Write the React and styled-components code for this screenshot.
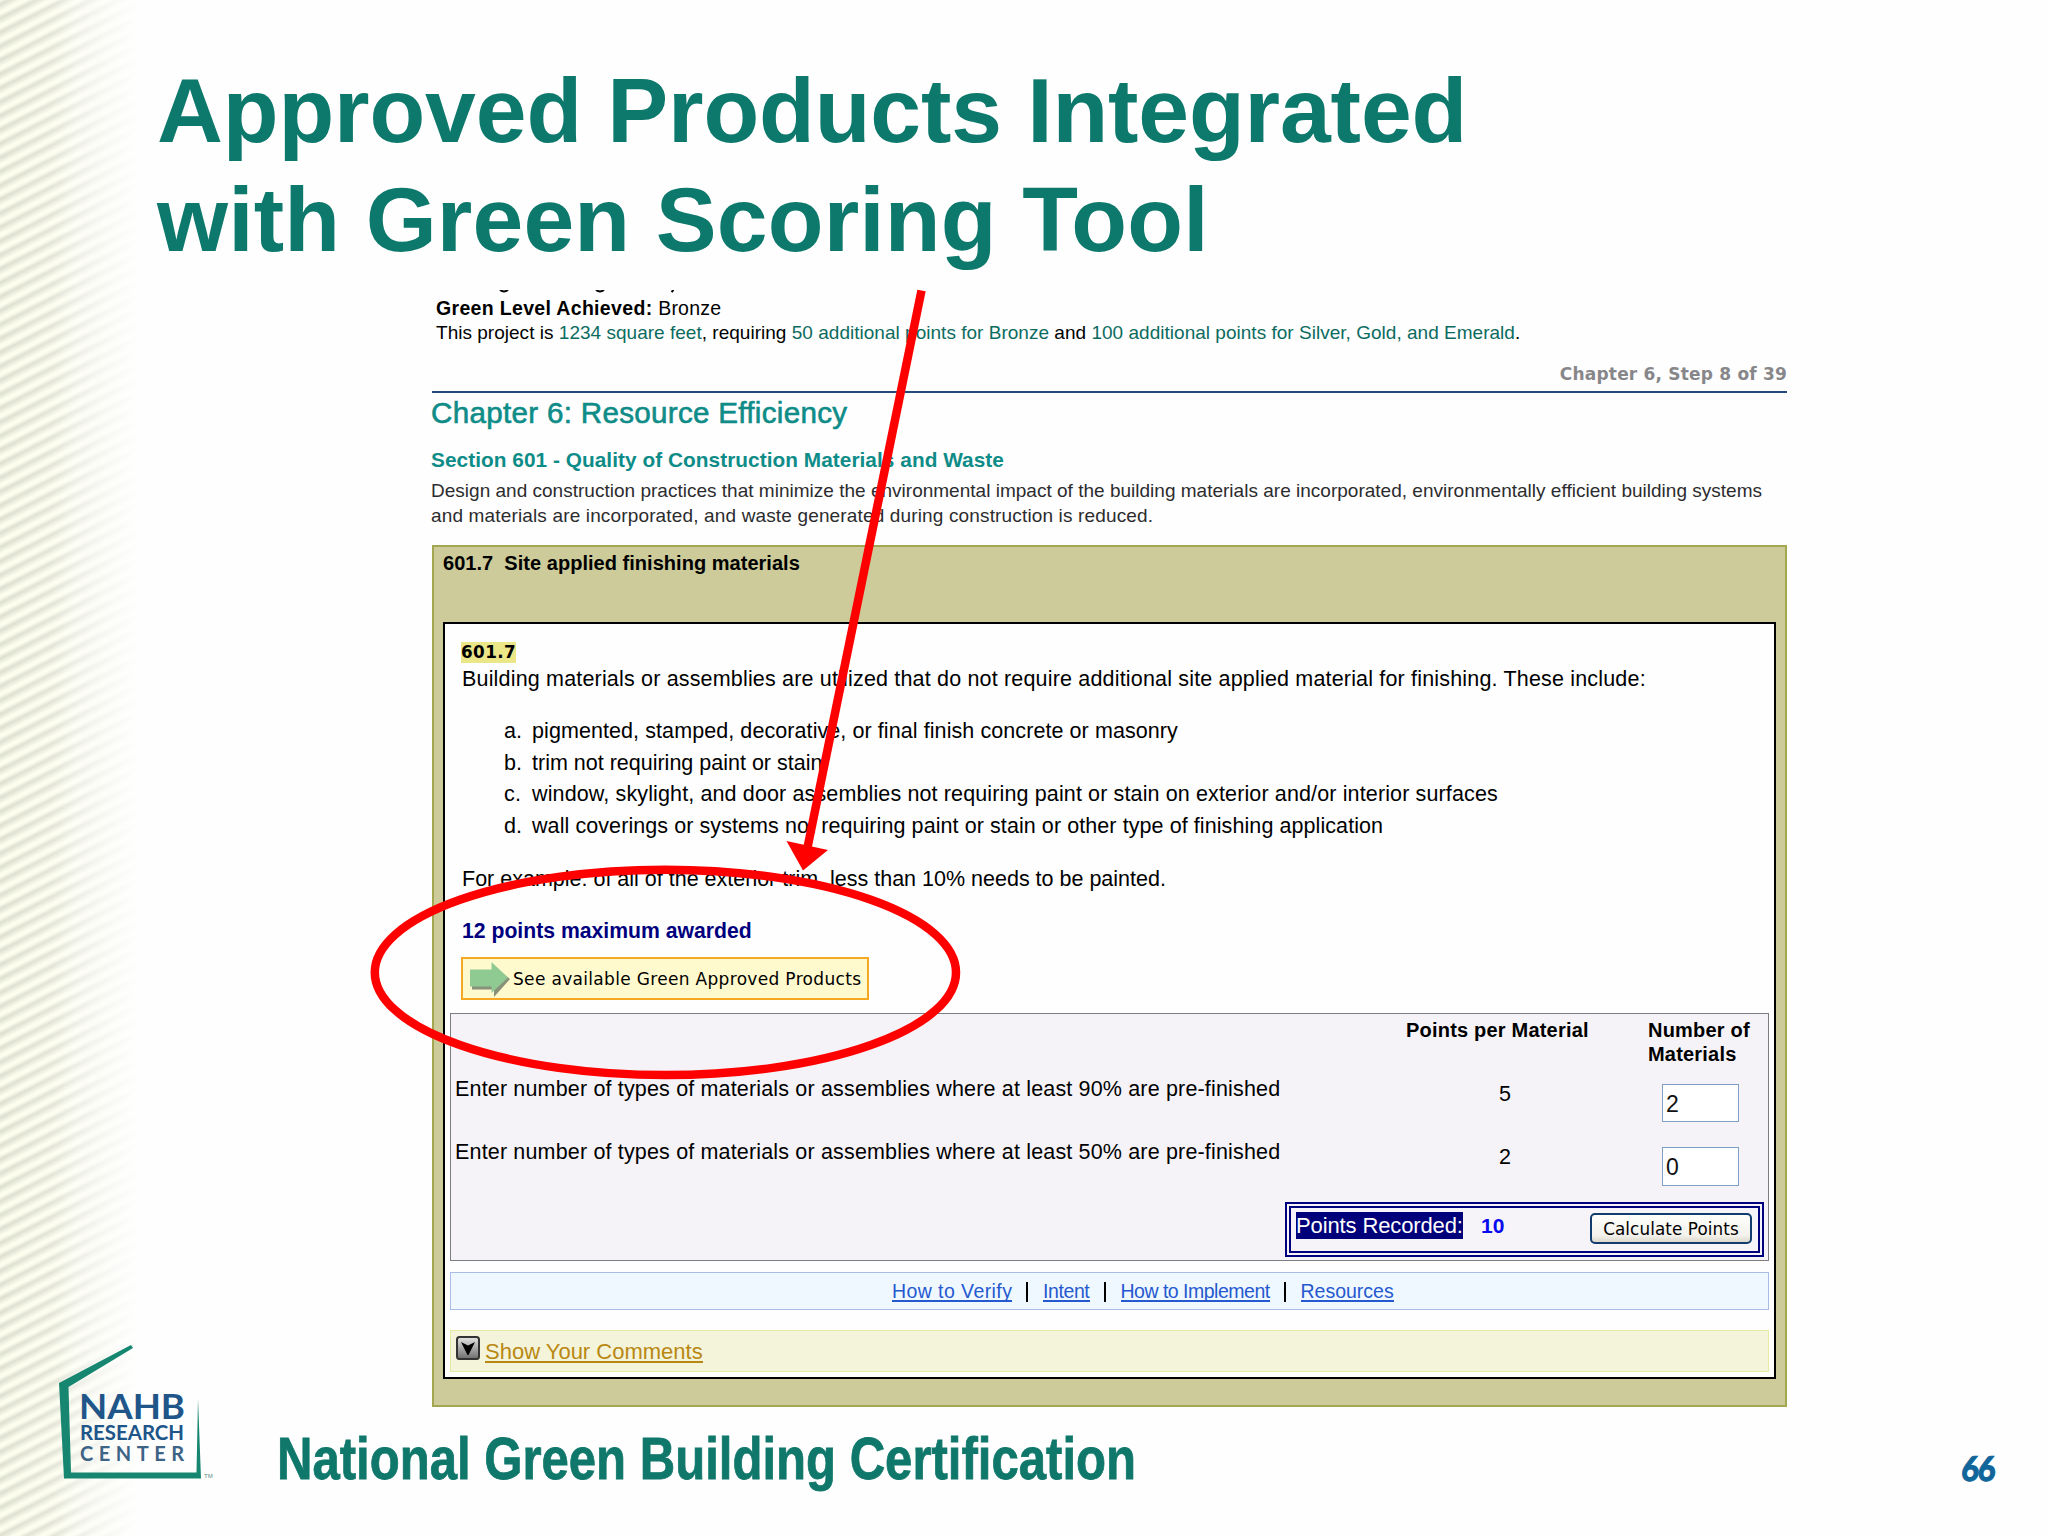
import React from "react";
import styled, { createGlobalStyle } from "styled-components";

const SANS = `"Liberation Sans", Arial, sans-serif`;
const WIDE = `"DejaVu Sans", Verdana, sans-serif`;

const GlobalStyle = createGlobalStyle`
  *, *::before, *::after { box-sizing: border-box; }
  body { margin: 0; background: #fff; }
`;

/* ---------- slide frame ---------- */

const Slide = styled.div`
  position: relative;
  width: 2048px;
  height: 1536px;
  overflow: hidden;
  display: flex;
  flex-direction: column;
  background: #fefefe;
  color: #000;
  font-family: ${SANS};
  isolation: isolate;

  &::before {
    content: "";
    position: absolute;
    inset: 0 auto 0 0;
    width: 150px;
    z-index: -1;
    background: repeating-linear-gradient(
      153deg,
      #fcfdec 0,
      #dddfd0 4px,
      #e4e6d7 5.5px,
      #fcfdec 10px,
      #fcfdec 12.4px
    );
    mask-image: linear-gradient(90deg, #000 0, rgba(0, 0, 0, 0.85) 35%, rgba(0, 0, 0, 0.35) 62%, transparent 92%);
  }
`;

const Header = styled.header`
  height: 290px;
  padding: 56px 0 0 157px;
`;

const Title = styled.h1`
  margin: 0;
  font-size: 91.3px;
  line-height: 109px;
  font-weight: 700;
  color: #0d796c;
`;

const TitleLine = styled.span`
  display: block;
  letter-spacing: ${(p) => p.$ls}px;
`;

const Main = styled.main`
  width: 1355px;
  height: 1117px;
  margin-left: 432px;
  display: flex;
  flex-direction: column;
`;

const Text = styled.p`
  margin: ${(p) => p.$mt || 0}px 0 0 ${(p) => p.$ml || 0}px;
  font-family: ${(p) => (p.$wide ? WIDE : SANS)};
  font-size: ${(p) => p.$size}px;
  line-height: ${(p) => p.$lh}px;
  letter-spacing: ${(p) => p.$ls || 0}px;
  font-weight: ${(p) => (p.$bold ? 700 : 400)};
  color: ${(p) => p.$color || "#000"};
  white-space: pre;
`;

/* ---------- summary ---------- */

const CutLine = styled.svg`
  display: block;
  width: 260px;
  height: 6px;
  flex: none;
`;

const Teal = styled.span`
  color: #0c6b60;
`;

const Bronze = styled.span`
  font-weight: 400;
  letter-spacing: 0.2px;
`;

const StepRow = styled.div`
  margin-top: 16px;
  height: 29.2px;
  display: flex;
  justify-content: flex-end;
  flex: none;
`;

const Rule = styled.hr`
  width: 100%;
  height: 2.5px;
  margin: 0;
  border: 0;
  flex: none;
  background: #234b78;
`;

const ChapterTitle = styled(Text).attrs({ as: "h2" })`
  -webkit-text-stroke: 0.6px #0e8c88;
`;

/* ---------- practice card ---------- */

const Card = styled.section`
  margin-top: 16.5px;
  height: 862px;
  flex: none;
  padding: 4px 9px 0;
  border: 2px solid #a3a750;
  background: #cccb99;
`;

const CardBody = styled.div`
  height: 757px;
  margin-top: 47px;
  padding: 0 5px;
  border: 2px solid #000;
  background: #fefefe;
  display: flex;
  flex-direction: column;
`;

const Article = styled.article`
  height: 389px;
  flex: none;
  padding: 18px 0 0 11px;
  display: flex;
  flex-direction: column;
  align-items: flex-start;
`;

const Mark = styled(Text)`
  background: #ebe687;
`;

const List = styled.ol`
  margin: 22.4px 0 0 43px;
  padding: 0;
  list-style: none;
`;

const Item = styled.li`
  display: grid;
  grid-template-columns: 28px auto;
  font-size: 21.5px;
  line-height: 31.8px;
  letter-spacing: ${(p) => p.$ls}px;
  white-space: nowrap;
`;

const ProductsButton = styled.button`
  margin-top: 12px;
  width: 408px;
  height: 43px;
  padding: 1px 0 0 5px;
  border: 2px solid #f7a823;
  background: #fffacd;
  display: flex;
  align-items: center;
  gap: 1px;
  font: 17px ${WIDE};
  letter-spacing: 0.32px;
  white-space: nowrap;
  color: #000;
`;

/* ---------- scoring panel ---------- */

const Panel = styled.div`
  height: 248px;
  flex: none;
  border: 1.5px solid #7d7d84;
  background: #f5f3f7;
  padding-top: 4.5px;
`;

const Row = styled.div`
  display: grid;
  grid-template-columns: 955px 242px 1fr;
  height: ${(p) => p.$h}px;
`;

const Points = styled(Text)`
  width: 198px;
  text-align: center;
`;

const CountInput = styled.input`
  width: 77px;
  height: 38.5px;
  margin: 16.7px 0 0 14px;
  padding: 2px 0 0 3px;
  border: 1.5px solid #7f9fc4;
  background: #fff;
  font: 23px ${SANS};
  color: #111;
  outline: none;
`;

const Recorded = styled.div`
  margin: 7.9px 4px 0 auto;
  width: 479px;
  height: 55px;
  padding: 4.7px 6px 0 5px;
  border: 6px double #00007e;
  background: #f6f4f8;
  display: flex;
  align-items: flex-start;
`;

const Selected = styled(Text)`
  background: #00007a;
  width: 167px;
`;

const CalcButton = styled.button`
  width: 162px;
  height: 30.5px;
  margin: 1px 0 0 auto;
  padding: 0;
  border: 2px solid #103d6e;
  border-radius: 5px;
  background: linear-gradient(#fefefc, #f3f2ec 75%, #dcd8cc);
  font: 16.8px ${WIDE};
  letter-spacing: 0.1px;
  color: #000;
  white-space: nowrap;
`;

/* ---------- link bars ---------- */

const LinkBar = styled.nav`
  margin-top: 10.7px;
  height: 38.3px;
  flex: none;
  padding-left: 441px;
  border: 1.5px solid #a9bce8;
  background: #eff8ff;
  display: flex;
  align-items: center;
`;

const Link = styled.a`
  width: ${(p) => p.$w}px;
  font-size: 19.5px;
  line-height: 22px;
  letter-spacing: ${(p) => p.$ls}px;
  white-space: nowrap;
  color: #2559cf;
  border-bottom: 2px solid #2559cf;
  height: 22px;
  margin-top: 1px;
`;

const Divider = styled.span`
  width: 2px;
  height: 20px;
  margin: 2px 15px 0 14px;
  background: #000;
`;

const CommentBar = styled.div`
  margin-top: 19.8px;
  height: 42.5px;
  flex: none;
  padding: 5px 0 0 5px;
  border: 1.5px solid #e6eaa2;
  background: #f3f4da;
  display: flex;
  gap: 5px;
`;

const CommentLink = styled.a`
  height: 26px;
  margin-top: 1px;
  font-size: 22px;
  line-height: 30px;
  color: #b98812;
  border-bottom: 2px solid #b98812;
`;

/* ---------- footer ---------- */

const Footer = styled.footer`
  height: 129px;
  display: flex;
  align-items: flex-start;
`;

const Logo = styled.svg`
  width: 170px;
  height: 150px;
  margin: -67px 0 0 50px;
  flex: none;
`;

const Wordmark = styled.div`
  width: 860px;
  margin: 22px 0 0 57px;
  font-size: 60px;
  line-height: 60px;
  font-weight: 700;
  color: #10776b;
  -webkit-text-stroke: 0.8px #10776b;
  white-space: nowrap;
  transform: scaleX(0.818);
  transform-origin: left;
`;

const PageNumber = styled.div`
  margin: 41px 54px 0 auto;
  font: 900 34px/40px Lato, sans-serif;
  letter-spacing: -1.5px;
  -webkit-text-stroke: 1px #10659a;
  color: #10659a;
  transform: skewX(-4deg) scaleX(0.9);
  transform-origin: right;
`;

const Callout = styled.svg`
  position: absolute;
  left: 0;
  top: 0;
  pointer-events: none;
`;

const GreenArrow = () => (
  <svg width="44" height="39" viewBox="0 0 44 39">
    <path d="M4 14H24V6L42 20L26 38V30.5H4Z" fill="#5f6f5c" opacity="0.75" />
    <path d="M2 10.5H23.5V3L40 18.5L23.5 34V27.5H2Z" fill="#8fca93" />
  </svg>
);

const ExpandIcon = () => (
  <svg width="24" height="24" viewBox="0 0 24 24">
    <defs>
      <linearGradient id="expand" x1="0" y1="0" x2="0" y2="1">
        <stop offset="0" stopColor="#e4e4e4" />
        <stop offset="1" stopColor="#6d6d6d" />
      </linearGradient>
    </defs>
    <rect x="1" y="1" width="22" height="22" rx="2.5" fill="url(#expand)" stroke="#333" strokeWidth="2" />
    <path d="M5 6L12 9.5L19 6L12.5 19H11.5Z" fill="#000" />
  </svg>
);

const LogoMark = () => (
  <Logo viewBox="50 1340 170 150">
    <path d="M131 1345L133 1348L68.5 1387L71 1472.5H196.5L198 1399L201 1478.5H64L59 1383Z" fill="#168671" />
    <g fill="#20558a" fontFamily="Lato, sans-serif" fontWeight="700">
      <text x="79" y="1418.5" fontSize="35" textLength="106" lengthAdjust="spacingAndGlyphs">NAHB</text>
      <text x="80" y="1440" fontSize="20" textLength="104" lengthAdjust="spacingAndGlyphs">RESEARCH</text>
      <text x="80" y="1461" fontSize="20" textLength="104" fill="#3d6487">CENTER</text>
    </g>
    <text x="204" y="1478" fontSize="6" fill="#5b8c84" fontFamily="Liberation Sans, sans-serif">TM</text>
  </Logo>
);

const ITEMS = [
  ["a.", "pigmented, stamped, decorative, or final finish concrete or masonry", 0.08],
  ["b.", "trim not requiring paint or stain", 0],
  ["c.", "window, skylight, and door assemblies not requiring paint or stain on exterior and/or interior surfaces", 0.13],
  ["d.", "wall coverings or systems not requiring paint or stain or other type of finishing application", 0.08],
];

const ROWS = [
  ["Enter number of types of materials or assemblies where at least 90% are pre-finished", 5, 2],
  ["Enter number of types of materials or assemblies where at least 50% are pre-finished", 2, 0],
];

export default function App() {
  return (
    <Slide>
      <GlobalStyle />
      <Header>
        <Title>
          <TitleLine $ls={-0.13}>Approved Products Integrated</TitleLine>
          <TitleLine $ls={0.15}>with Green Scoring Tool</TitleLine>
        </Title>
      </Header>

      <Main>
        <CutLine viewBox="0 0 260 6">
          <path d="M68 0Q72 3 76 0M164 0Q168 3 172 0M239.5 2L241.5 0" fill="none" stroke="#000" strokeWidth="2" />
        </CutLine>
        <Text $size={19.5} $lh={24.8} $ls={0.33} $ml={4} $bold>
          Green Level Achieved: <Bronze>Bronze</Bronze>
        </Text>
        <Text $size={19} $lh={24.8} $ls={0.02} $ml={4}>
          This project is <Teal>1234 square feet</Teal>, requiring <Teal>50 additional points for Bronze</Teal> and{" "}
          <Teal>100 additional points for Silver, Gold, and Emerald</Teal>.
        </Text>
        <StepRow>
          <Text $size={17} $lh={24} $ls={0.19} $color="#87878a" $wide $bold>
            Chapter 6, Step 8 of 39
          </Text>
        </StepRow>
        <Rule />
        <ChapterTitle $size={29.6} $lh={32} $ls={0.3} $mt={3.5} $ml={-1} $color="#0e8c88">
          Chapter 6: Resource Efficiency
        </ChapterTitle>
        <Text as="h3" $size={20.8} $lh={24} $ls={0.05} $mt={19} $ml={-1} $color="#0e8c88" $bold>
          Section 601 - Quality of Construction Materials and Waste
        </Text>
        <Text $size={19} $lh={24.6} $ls={0.011} $mt={7.5} $ml={-1} $color="#2c2c2e">
          Design and construction practices that minimize the environmental impact of the building materials are
          {" incorporated, environmentally efficient building systems"}
        </Text>
        <Text $size={19} $lh={24.6} $ls={0.15} $ml={-1} $color="#2c2c2e">
          and materials are incorporated, and waste generated during construction is reduced.
        </Text>

        <Card>
          <Text as="h4" $size={20} $lh={24} $ls={0.03} $bold>
            {"601.7  Site applied finishing materials"}
          </Text>
          <CardBody>
            <Article>
              <Mark $size={16.8} $lh={21} $ls={0.4} $wide $bold>
                601.7
              </Mark>
              <Text $size={21.5} $lh={28} $ls={0.176} $mt={2.4} $ml={1}>
                Building materials or assemblies are utilized that do not require additional site applied material for
                {" finishing. These include:"}
              </Text>
              <List>
                {ITEMS.map(([k, t, ls]) => (
                  <Item key={k} $ls={ls}>
                    <span>{k}</span>
                    <span>{t}</span>
                  </Item>
                ))}
              </List>
              <Text $size={21.5} $lh={28} $mt={22.4} $ml={1}>
                For example: of all of the exterior trim, less than 10% needs to be painted.
              </Text>
              <Text $size={21.2} $lh={28} $mt={23.5} $ml={1} $color="#00007e" $bold>
                12 points maximum awarded
              </Text>
              <ProductsButton>
                <GreenArrow />
                See available Green Approved Products
              </ProductsButton>
            </Article>

            <Panel>
              <Row $h={48.8}>
                <span />
                <Text $size={20} $lh={24} $ls={0.2} $bold>Points per Material</Text>
                <Text $size={20} $lh={24} $ls={0.2} $bold>{"Number of\nMaterials"}</Text>
              </Row>
              {ROWS.map(([label, per, count]) => (
                <Row key={label} $h={63.3}>
                  <Text $size={21.5} $lh={28} $ls={0.165} $mt={7.4} $ml={4}>{label}</Text>
                  <Points $size={21.5} $lh={28} $mt={12.4}>{per}</Points>
                  <CountInput defaultValue={count} />
                </Row>
              ))}
              <Recorded>
                <Selected $size={22} $lh={27} $ls={-0.12} $color="#fff">Points Recorded:</Selected>
                <Text $size={21} $lh={27} $ml={18} $color="#0a0aee" $bold>10</Text>
                <CalcButton>Calculate Points</CalcButton>
              </Recorded>
            </Panel>

            <LinkBar>
              <Link $w={120} $ls={0.42}>How to Verify</Link>
              <Divider />
              <Link $w={46.5} $ls={-0.4}>Intent</Link>
              <Divider />
              <Link $w={149} $ls={-0.5}>How to Implement</Link>
              <Divider />
              <Link $w={93} $ls={0}>Resources</Link>
            </LinkBar>

            <CommentBar>
              <ExpandIcon />
              <CommentLink>Show Your Comments</CommentLink>
            </CommentBar>
          </CardBody>
        </Card>
      </Main>

      <Footer>
        <LogoMark />
        <Wordmark>National Green Building Certification</Wordmark>
        <PageNumber>66</PageNumber>
      </Footer>

      <Callout width="2048" height="1536" viewBox="0 0 2048 1536">
        <ellipse cx="665.4" cy="972.4" rx="290.6" ry="102.7" fill="none" stroke="#fe0000" strokeWidth="8.5" />
        <path d="M921.5 290.5L807 850" stroke="#fe0000" strokeWidth="8.5" />
        <path d="M786.5 841L828 850L803 870.5Z" fill="#fe0000" />
      </Callout>
    </Slide>
  );
}
